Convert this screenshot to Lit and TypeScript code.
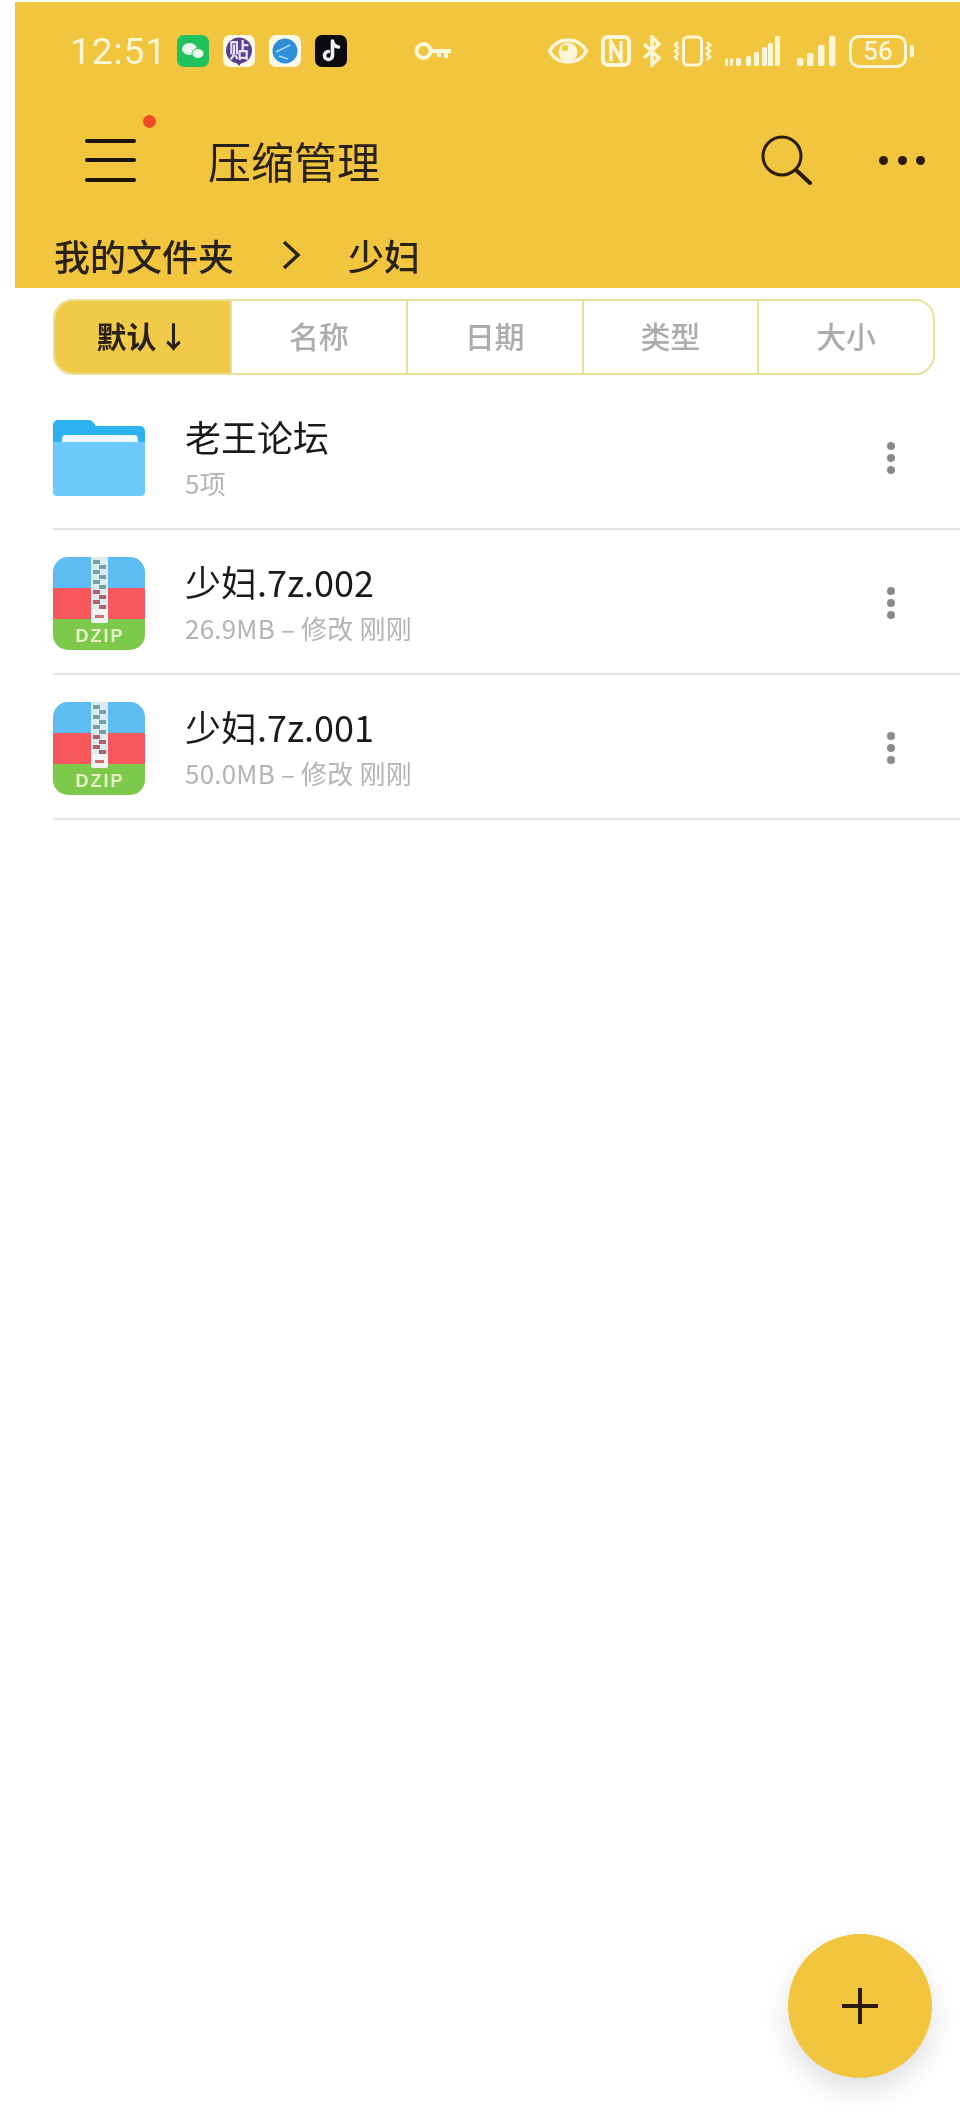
import { LitElement, html, css, svg } from "lit";
import { customElement } from "lit/decorators.js";

const tabs = ["默认\u200a↓", "名称", "日期", "类型", "大小"];

const files = [
  { name: "老王论坛", meta: "5项", kind: "folder" },
  { name: "少妇.7z.002", meta: "26.9MB – 修改 刚刚", kind: "zip" },
  { name: "少妇.7z.001", meta: "50.0MB – 修改 刚刚", kind: "zip" },
];

const folderIcon = html`<svg class="file-icon" viewBox="0 0 92 78">
  <path d="M0 6a5 5 0 0 1 5-5h31a5 5 0 0 1 4 2l3 4h44a5 5 0 0 1 5 5v20H0z" fill="#2db2f1" />
  <path d="M9 23v-3a4 4 0 0 1 4-4h68a4 4 0 0 1 4 4v3z" fill="#eef8fd" />
  <path d="M0 23h92v50a4 4 0 0 1-4 4H4a4 4 0 0 1-4-4z" fill="#6ccafb" />
</svg>`;

// zipper teeth down the middle of the archive icon
const teeth = [3, 13, 23, 33, 43, 53].map(
  (y) => svg`<rect x="40" y="${y}" width="7" height="4" fill="${y > 28 ? "#b0606a" : "#76a0ac"}" /><rect x="46" y="${y + 5}" width="7" height="4" fill="${y > 28 ? "#b0606a" : "#76a0ac"}" />`
);

const zipIcon = html`<svg class="file-icon" viewBox="0 0 92 93">
  <clipPath id="zip-clip"><rect width="92" height="93" rx="15" /></clipPath>
  <g clip-path="url(#zip-clip)">
    <rect width="92" height="31" fill="#5dbdf2" />
    <rect y="31" width="92" height="31" fill="#f9575e" />
    <rect y="62" width="92" height="31" fill="#7cc94c" />
    <rect x="38" width="17" height="65" fill="#dcebee" />
    ${teeth}
    <rect x="38" y="52" width="17" height="14" rx="2" fill="#f0f4f2" />
    <rect x="42" y="58" width="9" height="3" fill="#d56a70" />
  </g>
  <text x="47" y="85" class="dzip" text-anchor="middle">DZIP</text>
</svg>`;

@customElement("app-root")
export class AppRoot extends LitElement {
  static styles = css`
    :host {
      display: block;
      position: relative;
      width: 960px;
      height: 2120px;
      background: #fff;
      overflow: hidden;
      filter: blur(0.5px);
      font-family: "Noto Sans CJK SC", "Noto Sans", sans-serif;
    }

    .header {
      margin: 2px 0 0 15px;
      height: 286px;
      background: #f1c53e;
      display: flex;
      flex-direction: column;
      color: #2a2118;
    }

    .status {
      height: 66px;
      margin-top: 16px;
      padding-left: 55px;
      display: flex;
      align-items: center;
      color: #fdf6d8;
    }

    .time {
      font-family: Roboto, sans-serif;
      font-size: 37px;
      letter-spacing: 1px;
      width: 107px;
    }

    .app-icons {
      display: flex;
      gap: 14px;
    }

    .app-icon {
      width: 32px;
      height: 32px;
      display: block;
    }

    .app-icon text {
      font-family: "Noto Sans CJK SC", sans-serif;
      font-size: 20px;
      font-weight: 700;
      fill: #e8e0f5;
    }

    .key {
      width: 37px;
      height: 20px;
      margin-left: 67px;
    }

    .sys {
      display: flex;
      align-items: center;
      margin-left: 97px;
    }

    .sys svg {
      display: block;
    }

    .battery {
      width: 58px;
      height: 33px;
      margin-left: 12px;
      box-sizing: border-box;
      border: 3px solid #fdf6d8;
      border-radius: 10px;
      display: flex;
      align-items: center;
      justify-content: center;
      font-family: Roboto, sans-serif;
      font-size: 26px;
      font-weight: 500;
      line-height: 1;
    }

    .nub {
      width: 4px;
      height: 12px;
      margin-left: 3px;
      background: #fdf6d8;
      border-radius: 0 2px 2px 0;
    }

    .toolbar {
      height: 74px;
      margin-top: 39px;
      display: flex;
      align-items: center;
      position: relative;
    }

    .menu {
      width: 51px;
      margin-left: 70px;
      height: 43px;
      display: flex;
      flex-direction: column;
      justify-content: space-between;
    }

    .menu span {
      height: 4px;
      border-radius: 2px;
      background: #1d1408;
    }

    .red-dot {
      position: absolute;
      left: 128px;
      top: -8px;
      width: 13px;
      height: 13px;
      border-radius: 50%;
      background: #ee4a23;
    }

    .title {
      margin-left: 72px;
      font-size: 43px;
      line-height: 1;
      flex: 1;
    }

    .search {
      width: 52px;
      height: 52px;
      margin-right: 67px;
      display: block;
    }

    .more {
      display: flex;
      gap: 9.5px;
      margin-right: 35px;
    }

    .more span {
      width: 9px;
      height: 9px;
      border-radius: 50%;
      background: #2a1a08;
    }

    .crumbs {
      margin-top: 38px;
      padding-left: 39px;
      display: flex;
      align-items: center;
      font-size: 36px;
      font-weight: 500;
      line-height: 40px;
    }

    .chevron {
      width: 20px;
      height: 32px;
      margin: 0 47px 0 47px;
      display: block;
    }

    .tabs {
      margin: 11px 25px 0 53px;
      height: 76px;
      box-sizing: border-box;
      border: 2px solid #ebe097;
      border-radius: 20px;
      overflow: hidden;
      display: grid;
      grid-template-columns: 175px repeat(4, 1fr);
    }

    .tab {
      display: flex;
      align-items: center;
      justify-content: center;
      padding-bottom: 4px;
      font-size: 30px;
      font-weight: 500;
      color: #acacac;
      border-left: 2px solid #ebe097;
    }

    .tab.active {
      background: #f1ca49;
      color: #2a2118;
      border-left: none;
      font-weight: 700;
    }

    .list {
      margin: 10px 0 0 53px;
    }

    .row {
      height: 145px;
      box-sizing: border-box;
      border-bottom: 2px solid #e4e4e4;
      display: flex;
      align-items: center;
    }

    .file-icon {
      width: 92px;
      margin-top: 3px;
      display: block;
      overflow: visible;
    }

    .dzip {
      font-family: "Liberation Sans", sans-serif;
      font-size: 18px;
      font-weight: 700;
      letter-spacing: 2px;
      fill: #e6f2c4;
    }

    .info {
      flex: 1;
      margin-left: 40px;
      margin-top: -1px;
    }

    .name {
      font-size: 36px;
      line-height: 44px;
      color: #1a1a1a;
    }

    .meta {
      margin-top: 10px;
      font-size: 26px;
      line-height: 30px;
      letter-spacing: 0.2px;
      color: #b4b4b4;
    }

    .kebab {
      display: flex;
      flex-direction: column;
      gap: 4px;
      margin: 2px 65px 0 0;
    }

    .kebab span {
      width: 8px;
      height: 8px;
      border-radius: 50%;
      background: #8a8a8a;
    }

    .fab {
      position: absolute;
      left: 788px;
      top: 1934px;
      width: 144px;
      height: 144px;
      border-radius: 50%;
      background: #f1c53e;
      box-shadow: 0 12px 28px rgba(70, 70, 90, 0.18);
      display: flex;
      align-items: center;
      justify-content: center;
    }

    .fab svg {
      width: 38px;
      height: 38px;
      display: block;
    }
  `;

  statusIcons() {
    return html`<div class="app-icons">
      <svg class="app-icon" viewBox="0 0 32 32">
        <rect width="32" height="32" rx="7" fill="#1fc25c" />
        <ellipse cx="12.500" cy="14" rx="7.500" ry="6" fill="#e9f8ea" />
        <ellipse cx="21" cy="18.500" rx="6" ry="5" fill="#e9f8ea" stroke="#1fc25c" />
      </svg>
      <svg class="app-icon" viewBox="0 0 32 32">
        <rect width="32" height="32" rx="7" fill="#fdf8e8" />
        <circle cx="16" cy="15.500" r="13" fill="#55418f" />
        <path d="M13 27h6l-3 4z" fill="#55418f" />
        <text x="16" y="22.500" text-anchor="middle">贴</text>
      </svg>
      <svg class="app-icon" viewBox="0 0 32 32">
        <rect width="32" height="32" rx="7" fill="#fdf9e8" />
        <circle cx="16" cy="16" r="12.500" fill="#2c8fd8" />
        <path d="M7 17l14-7M10 21l9 3" stroke="#a8d8f5" stroke-width="1.500" fill="none" />
      </svg>
      <svg class="app-icon" viewBox="0 0 32 32">
        <rect width="32" height="32" rx="7" fill="#0c0a10" />
        <path d="M17.500 6v14.500a4 4 0 1 1-4-4M17.500 6c.5 3.500 2.500 5.500 6 6" fill="none" stroke="#f4f2f4" stroke-width="3.600" stroke-linecap="round" />
      </svg>
    </div>`;
  }

  sysIcons() {
    const c = "#fdf6d8";
    return html`<div class="sys">
      <svg width="40" height="26" viewBox="0 0 40 26">
        <path d="M1.500 13C6 5 13 2 20 2s14 3 18.500 11C34 21 27 24 20 24S6 21 1.500 13z" fill="none" stroke="${c}" stroke-width="3.500" />
        <circle cx="20" cy="14" r="9.500" fill="${c}" />
        <circle cx="17" cy="10" r="3" fill="#f1c53e" />
      </svg>
      <svg width="30" height="32" viewBox="0 0 30 32" style="margin-left:13px">
        <rect x="2" y="2" width="26" height="28" rx="5" fill="none" stroke="${c}" stroke-width="4" />
        <path d="M10 26V7l10 18V6" fill="none" stroke="${c}" stroke-width="3.500" />
      </svg>
      <svg width="20" height="32" viewBox="0 0 20 32" style="margin-left:11px">
        <path d="M2 9l15 14-7 7V2l7 7L2 23" fill="none" stroke="${c}" stroke-width="3.500" />
      </svg>
      <svg width="39" height="32" viewBox="0 0 39 32" style="margin-left:11px">
        <rect x="10.500" y="2" width="18" height="28" rx="4" fill="none" stroke="${c}" stroke-width="3" />
        <path d="M5 7L2 10l3 3-3 3 3 3-3 3 3 3M34 7l3 3-3 3 3 3-3 3 3 3-3 3" fill="none" stroke="${c}" stroke-width="2.500" />
      </svg>
      <svg width="55" height="30" viewBox="0 0 55 30" style="margin-left:13px">
        ${[
          [0, 8, 3],
          [5, 8, 3],
          [11, 8, 5],
          [21, 10, 5],
          [29, 14, 5],
          [37, 19, 5],
          [43, 23, 5],
          [50, 30, 5],
        ].map(([x, h, w]) => svg`<rect x="${x}" y="${30 - h}" width="${w}" height="${h}" rx="1.500" fill="${c}" />`)}
      </svg>
      <svg width="40" height="30" viewBox="0 0 40 30" style="margin-left:17px">
        ${[
          [0, 8],
          [10, 13],
          [21, 21],
          [32, 30],
        ].map(([x, h]) => svg`<rect x="${x}" y="${30 - h}" width="6.500" height="${h}" rx="1.500" fill="${c}" />`)}
      </svg>
      <div class="battery">56</div>
      <div class="nub"></div>
    </div>`;
  }

  render() {
    return html`
      <div class="header">
        <div class="status">
          <span class="time">12:51</span>
          ${this.statusIcons()}
          <svg class="key" viewBox="0 0 37 20">
            <circle cx="9.500" cy="10" r="7" fill="none" stroke="#fdf6d8" stroke-width="4" />
            <path d="M16 8h21v4h-3v5h-4v-5h-3v4h-4v-4h-7z" fill="#fdf6d8" />
          </svg>
          ${this.sysIcons()}
        </div>
        <div class="toolbar">
          <div class="menu"><span></span><span></span><span></span></div>
          <span class="red-dot"></span>
          <span class="title">压缩管理</span>
          <svg class="search" viewBox="0 0 52 52">
            <circle cx="22" cy="22" r="19" fill="none" stroke="#2a1a08" stroke-width="3" />
            <path d="M36 36l14 13" stroke="#2a1a08" stroke-width="4" stroke-linecap="round" />
          </svg>
          <div class="more"><span></span><span></span><span></span></div>
        </div>
        <div class="crumbs">
          <span>我的文件夹</span>
          <svg class="chevron" viewBox="0 0 20 32">
            <path d="M3 3l14 13L3 29" fill="none" stroke="#2a2118" stroke-width="3.500" />
          </svg>
          <span>少妇</span>
        </div>
      </div>

      <div class="tabs">
        ${tabs.map((t, i) => html`<div class="tab ${i === 0 ? "active" : ""}">${t}</div>`)}
      </div>

      <div class="list">
        ${files.map(
          (f) => html`<div class="row">
            ${f.kind === "folder" ? folderIcon : zipIcon}
            <div class="info">
              <div class="name">${f.name}</div>
              <div class="meta">${f.meta}</div>
            </div>
            <div class="kebab"><span></span><span></span><span></span></div>
          </div>`
        )}
      </div>

      <div class="fab">
        <svg viewBox="0 0 38 38">
          <path d="M19 1v36M1 19h36" stroke="#2a1a08" stroke-width="4" />
        </svg>
      </div>
    `;
  }
}
